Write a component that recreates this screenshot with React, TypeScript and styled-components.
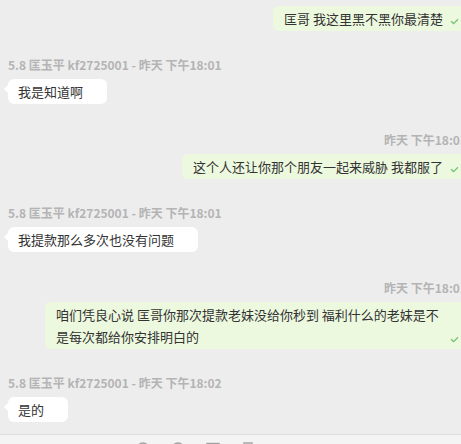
import React from "react";
import styled, { createGlobalStyle, css } from "styled-components";

const GlobalStyle = createGlobalStyle`
  html, body {
    margin: 0;
    padding: 0;
    background: #ededed;
    overflow: hidden;
  }
  body {
    font-family: "Noto Sans CJK SC", "Noto Sans", "Liberation Sans", sans-serif;
  }
`;

const Page = styled.div`
  width: 461px;
  height: 444px;
  display: flex;
  flex-direction: column;
  overflow: hidden;
`;

const ChatArea = styled.div`
  height: 434px;
  width: 475px;
  box-sizing: border-box;
  padding: 0 8px;
  display: flex;
  flex-direction: column;
  flex-shrink: 0;
`;

const MessageGroup = styled.div<{ $side: "left" | "right"; $top: number }>`
  display: flex;
  flex-direction: column;
  align-items: ${(p) => (p.$side === "left" ? "flex-start" : "flex-end")};
  margin-top: ${(p) => p.$top}px;
`;

const Meta = styled.div`
  font-size: 12px;
  line-height: 20px;
  height: 20px;
  color: #b4b4b4;
  font-weight: bold;
  white-space: nowrap;
  margin-bottom: 4px;
`;

const Bubble = styled.div<{ $side: "left" | "right" }>`
  position: relative;
  box-sizing: border-box;
  max-width: 422px;
  font-size: 13px;
  line-height: 22px;
  color: #333;
  border-radius: 6px;
  padding: 2px 24px 1px 10px;
  ${(p) =>
    p.$side === "left"
      ? css`
          background: #ffffff;
          &::before {
            content: "";
            position: absolute;
            left: -4px;
            top: 6px;
            border-style: solid;
            border-width: 4px 4px 4px 0;
            border-color: transparent #ffffff transparent transparent;
          }
        `
      : css`
          background: #edf9df;
          padding-left: 11px;
        `}
`;

const Check = styled.span`
  position: absolute;
  right: 8px;
  bottom: 6px;
  width: 9px;
  height: 7px;
  display: block;
  line-height: 0;
`;

const Footer = styled.div`
  flex: 1;
  border-top: 1px solid #dcdcdc;
  background: #f4f4f4;
  display: flex;
  gap: 21px;
  padding: 7px 0 0 136px;
  overflow: hidden;
`;

const ToolIcon = styled.svg`
  width: 14px;
  height: 14px;
  flex-shrink: 0;
`;

const Tick = () => (
  <Check>
    <svg width="9" height="7" viewBox="0 0 9 7">
      <polyline
        points="1,3.2 3.6,5.6 8,1.2"
        fill="none"
        stroke="#74c474"
        strokeWidth="1.3"
      />
    </svg>
  </Check>
);

type Msg = {
  side: "left" | "right";
  meta?: string;
  text: string;
  top: number;
};

const messages: Msg[] = [
  { side: "right", text: "匡哥 我这里黑不黑你最清楚", top: 6 },
  {
    side: "left",
    meta: "5.8 匡玉平 kf2725001 - 昨天 下午18:01",
    text: "我是知道啊",
    top: 24,
  },
  {
    side: "right",
    meta: "昨天 下午18:01",
    text: "这个人还让你那个朋友一起来威胁 我都服了",
    top: 26,
  },
  {
    side: "left",
    meta: "5.8 匡玉平 kf2725001 - 昨天 下午18:01",
    text: "我提款那么多次也没有问题",
    top: 24,
  },
  {
    side: "right",
    meta: "昨天 下午18:01",
    text: "咱们凭良心说 匡哥你那次提款老妹没给你秒到 福利什么的老妹是不是每次都给你安排明白的",
    top: 26,
  },
  {
    side: "left",
    meta: "5.8 匡玉平 kf2725001 - 昨天 下午18:02",
    text: "是的",
    top: 24,
  },
];

export default function App() {
  return (
    <>
      <GlobalStyle />
      <Page>
        <ChatArea>
          {messages.map((m, i) => (
            <MessageGroup key={i} $side={m.side} $top={m.top}>
              {m.meta && <Meta>{m.meta}</Meta>}
              <Bubble $side={m.side}>
                {m.text}
                {m.side === "right" && <Tick />}
              </Bubble>
            </MessageGroup>
          ))}
        </ChatArea>
        <Footer>
          <ToolIcon viewBox="0 0 14 14">
            <circle cx="7" cy="7" r="6" fill="none" stroke="#a0a0a0" strokeWidth="1.4" />
          </ToolIcon>
          <ToolIcon viewBox="0 0 14 14">
            <circle cx="7" cy="7" r="6" fill="none" stroke="#a0a0a0" strokeWidth="1.4" />
          </ToolIcon>
          <ToolIcon viewBox="0 0 14 14">
            <rect x="1" y="1.5" width="12" height="11" fill="none" stroke="#a0a0a0" strokeWidth="1.4" />
          </ToolIcon>
          <ToolIcon viewBox="0 0 14 14">
            <rect x="3" y="1" width="8" height="12" fill="none" stroke="#a0a0a0" strokeWidth="1.4" />
          </ToolIcon>
        </Footer>
      </Page>
    </>
  );
}
